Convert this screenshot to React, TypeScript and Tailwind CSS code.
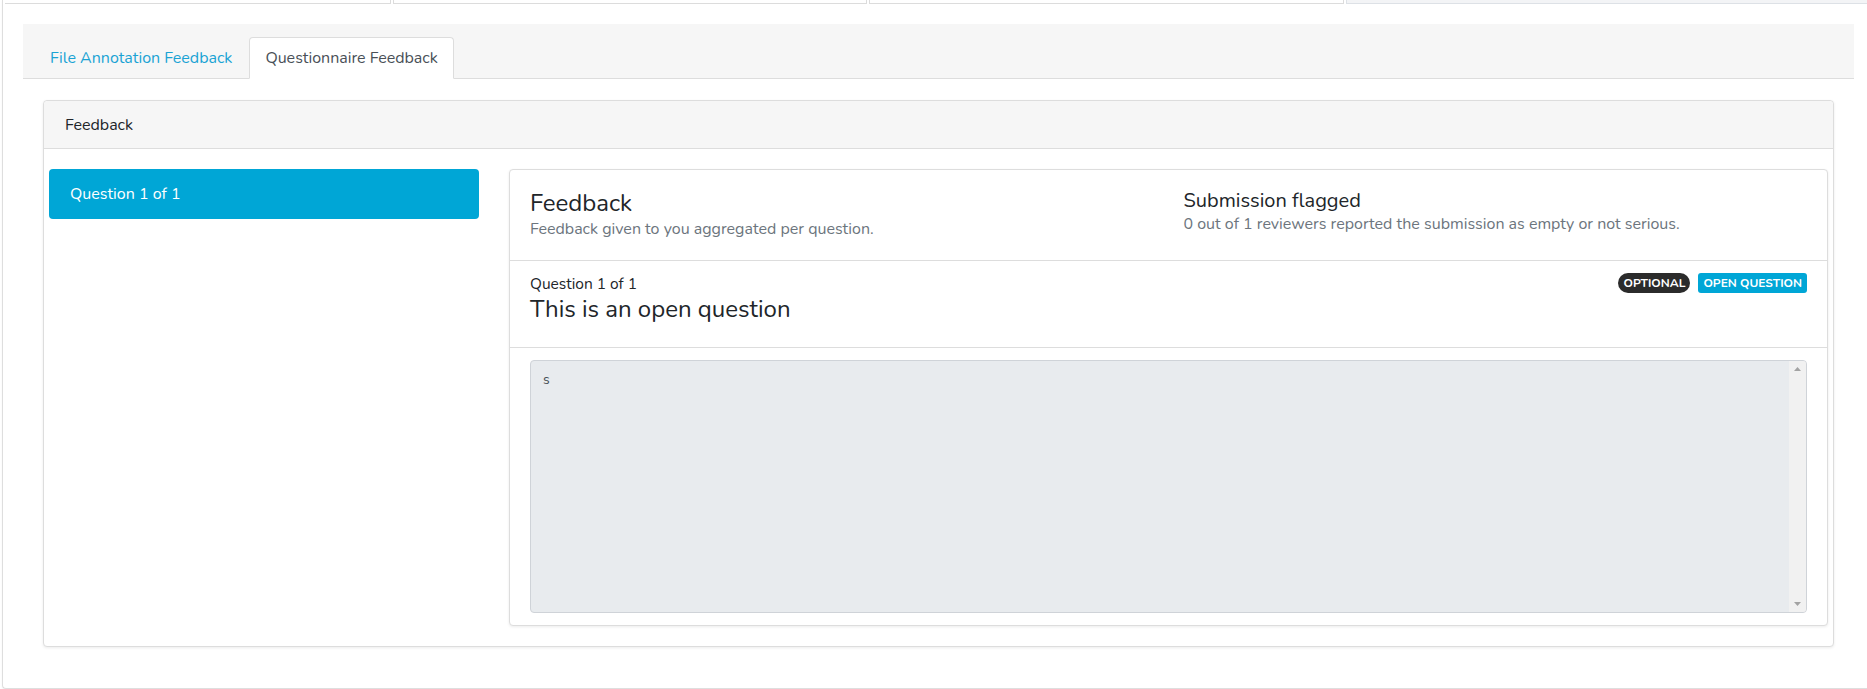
import React from "react";

export default function App() {
  return (
    <div className="w-screen h-[689px] overflow-hidden bg-white font-['Nunito','Lato',sans-serif]">
      <div className="ml-[2px] w-[1872px] border-l border-b border-[#dedede] rounded-bl-[4px] shadow-[0_1px_2px_rgba(0,0,0,0.06)] pb-[41px]">
        {/* top strip (cut-off previous row) */}
        <div className="flex h-[4px] gap-[2px] pl-[2px]">
          <div className="w-[386px] border-r border-b border-[#dcdcdc]" />
          <div className="w-[474px] border-x border-b border-[#dcdcdc]" />
          <div className="w-[475px] border-x border-b border-[#dcdcdc]" />
          <div className="flex-1 border-l border-b border-[#dde1e6] bg-[#f3f4f6]" />
        </div>

        <div className="px-[20px] pt-[20px]">
          {/* tabs */}
          <div className="flex items-end h-[55px] bg-[#f6f6f6] border-b border-[#dddddd] pl-[11px]">
            <div className="h-[42px] -mb-px mr-[1px] px-[15px] flex items-center text-[16px] text-[#1aa3d4] border border-transparent">
              File Annotation Feedback
            </div>
            <div className="h-[42px] -mb-px px-[15px] flex items-center text-[16px] text-[#495057] bg-white border border-[#dddddd] border-b-white rounded-t-[4px]">
              Questionnaire Feedback
            </div>
          </div>

          {/* outer card */}
          <div className="mx-[20px] mt-[21px] border border-[#dddddd] rounded-[4px] bg-white shadow-[0_1px_3px_rgba(0,0,0,0.08)]">
            <div className="h-[48px] bg-[#f6f6f6] border-b border-[#dddddd] rounded-t-[4px] px-[21px] flex items-center text-[16px] text-[#212529]">
              Feedback
            </div>
            <div className="pt-[20px] pb-[20px] px-[5px] grid grid-cols-[430px_1fr] gap-[30px] items-start">
              {/* left list */}
              <div>
                <div className="h-[50px] rounded-[4px] bg-[#00a6d6] text-white text-[16px] flex items-center pl-[21px]">
                  Question 1 of 1
                </div>
              </div>

              {/* inner card */}
              <div className="border border-[#dddddd] rounded-[4px] bg-white shadow-[0_1px_3px_rgba(0,0,0,0.08)]">
                <div className="h-[91px] border-b border-[#dddddd] px-[20px] pt-[19px] grid grid-cols-2 gap-x-[30px]">
                  <div>
                    <div className="text-[24px] leading-[1.2] text-[#212529]">Feedback</div>
                    <div className="text-[16px] leading-[22px] text-[#6c757d]">
                      Feedback given to you aggregated per question.
                    </div>
                  </div>
                  <div>
                    <div className="text-[20px] leading-[1.2] text-[#212529]">Submission flagged</div>
                    <div className="text-[16px] leading-[22px] text-[#6c757d]">
                      0 out of 1 reviewers reported the submission as empty or not serious.
                    </div>
                  </div>
                </div>

                <div className="h-[87px] border-b border-[#dddddd] px-[20px] pt-[12px] flex justify-between items-start">
                  <div>
                    <div className="text-[15.5px] leading-[22px] text-[#212529]">Question 1 of 1</div>
                    <div className="text-[24px] leading-[1.2] text-[#212529]">This is an open question</div>
                  </div>
                  <div className="flex gap-[8px]">
                    <span className="h-[20px] px-[5px] rounded-full bg-[#2b2b2b] text-white text-[12px] font-bold leading-[20px]">
                      OPTIONAL
                    </span>
                    <span className="h-[20px] px-[5px] rounded-[3px] bg-[#00a6d6] text-white text-[12px] font-bold leading-[20px]">
                      OPEN QUESTION
                    </span>
                  </div>
                </div>

                <div className="px-[20px] pt-[12px] pb-[12px]">
                  <div className="flex h-[253px] bg-[#e8ebee] border border-[#cfd3d8] rounded-[4px] overflow-hidden">
                    <textarea
                      readOnly
                      value="s"
                      className="flex-1 h-full bg-transparent px-[12px] py-[8px] text-[14px] leading-[21px] text-[#495057] resize-none overflow-hidden outline-none font-['Nunito','Lato',sans-serif]"
                    />
                    <div className="w-[17px] bg-[#f1f1f1] flex flex-col justify-between items-center py-[6px]">
                      <svg width="7" height="4" viewBox="0 0 7 4">
                        <path d="M0 4 L3.5 0 L7 4 Z" fill="#a3a3a3" />
                      </svg>
                      <svg width="7" height="4" viewBox="0 0 7 4">
                        <path d="M0 0 L3.5 4 L7 0 Z" fill="#a3a3a3" />
                      </svg>
                    </div>
                  </div>
                </div>
              </div>
            </div>
          </div>
        </div>
      </div>
    </div>
  );
}
